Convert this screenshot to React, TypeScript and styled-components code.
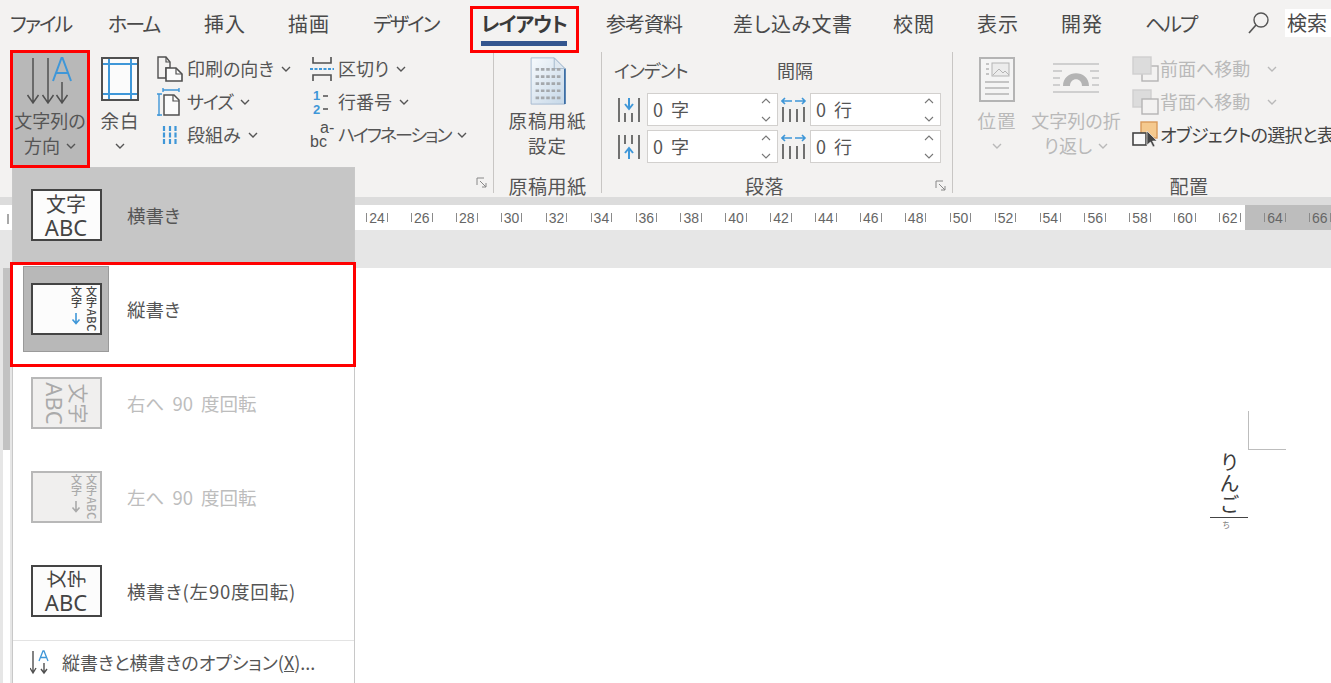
import React from 'react';
import styled, { createGlobalStyle } from 'styled-components';

const Global = createGlobalStyle`
  html, body { margin: 0; padding: 0; height: 100%; background: #fff; overflow: hidden; }
  body { font-family: "Noto Sans CJK JP", "Noto Sans", sans-serif; font-feature-settings: "palt"; color: #444; }
`;

const Page = styled.div`
  position: relative;
  width: 1331px;
  height: 683px;
  overflow: hidden;
  display: flex;
  flex-direction: column;
`;

const TabBar = styled.div`
  height: 52px;
  flex: none;
  background: #f3f2f1;
  display: flex;
  padding-left: 10px;
  font-size: 20px;
  color: #4a4a4a;
`;
const Tab = styled.div<{ $w: number; $ls: number; $active?: boolean }>`
  width: ${p => p.$w}px;
  flex: none;
  height: 46px;
  line-height: 48px;
  white-space: nowrap;
  letter-spacing: ${p => p.$ls}px;
  font-weight: ${p => (p.$active ? 700 : 400)};
  color: ${p => (p.$active ? '#3a3a3a' : '#4a4a4a')};
`;
const TabLabel = styled.span<{ $active?: boolean }>`
  display: inline-block;
  height: 46px;
  box-sizing: border-box;
  border-bottom: ${p => (p.$active ? '5px solid #33558f' : 'none')};
`;
const SearchBox = styled.div`
  display: flex;
  margin-left: 12px;
  height: 46px;
  align-items: center;
  gap: 14px;
`;
const SearchText = styled.span`
  background: #fff;
  width: 50px;
  height: 28px;
  line-height: 28px;
  padding-left: 2px;
  white-space: nowrap;
`;

const Ribbon = styled.div`
  height: 145px;
  flex: none;
  background: #f3f2f1;
  display: flex;
  font-size: 18px;
  color: #555;
  line-height: 25px;
`;
const Group = styled.section<{ $w: number; $sep?: boolean }>`
  width: ${p => p.$w}px;
  flex: none;
  height: 141px;
  display: flex;
  flex-direction: column;
  box-sizing: border-box;
  border-right: ${p => (p.$sep ? '1px solid #c8c6c4' : 'none')};
`;
const GroupBody = styled.div<{ $pl?: number }>`
  flex: none;
  height: 119px;
  display: flex;
  padding-left: ${p => p.$pl ?? 0}px;
`;
const GroupFooter = styled.footer`
  display: grid;
  grid-template-columns: 1fr auto 1fr;
  align-items: center;
  height: 22px;
  box-sizing: border-box;
  padding: 2px 5px 0 0;
  font-size: 19px;
  letter-spacing: 0.5px;
  color: #555;
`;
const FooterLabel = styled.span<{ $ml?: number; $mr?: number }>`
  grid-column: 2;
  margin-left: ${p => p.$ml ?? 0}px;
  margin-right: ${p => p.$mr ?? 0}px;
`;
const Launcher = styled.svg`
  grid-column: 3;
  justify-self: end;
`;

const BigButton = styled.div<{ $w: number; $ml?: number; $active?: boolean; $off?: boolean }>`
  width: ${p => p.$w}px;
  margin-left: ${p => p.$ml ?? 0}px;
  flex: none;
  height: 115px;
  display: flex;
  flex-direction: column;
  align-items: center;
  text-align: center;
  background: ${p => (p.$active ? '#b8b8b8' : 'transparent')};
  color: ${p => (p.$off ? '#b9b9b9' : '#555')};
`;
const BigIcon = styled.svg`
  display: block;
  flex: none;
  margin-top: 4px;
  margin-bottom: 2px;
`;
const PaperIcon = styled.svg`
  display: block;
  flex: none;
  margin-top: 5px;
  margin-bottom: 3px;
`;
const BigLine = styled.span<{ $wide?: boolean }>`
  display: flex;
  align-items: center;
  justify-content: center;
  height: 25px;
  gap: 6px;
  white-space: nowrap;
  font-size: ${p => (p.$wide ? 18.5 : 18)}px;
  letter-spacing: ${p => (p.$wide ? 1 : 0)}px;
`;

const Stack = styled.div<{ $w: number; $ml?: number }>`
  width: ${p => p.$w}px;
  margin-left: ${p => p.$ml ?? 0}px;
  flex: none;
  display: flex;
  flex-direction: column;
`;
const SmallRow = styled.div<{ $off?: boolean; $dark?: boolean }>`
  height: 33px;
  display: flex;
  align-items: center;
  white-space: nowrap;
  color: ${p => (p.$off ? '#b9b9b9' : p.$dark ? '#444' : '#555')};
`;
const SmallLabel = styled.span<{ $ls?: number }>`
  letter-spacing: ${p => p.$ls ?? 0}px;
`;
const SmallIcon = styled.span<{ $w: number }>`
  width: ${p => p.$w}px;
  flex: none;
  display: flex;
  align-items: center;
`;
const Chev = styled.svg<{ $ml?: number }>`
  margin-left: ${p => p.$ml ?? 7}px;
  flex: none;
`;

const ParaGrid = styled.div`
  padding-left: 12px;
  display: grid;
  grid-template-columns: 33px 131px 32px 131px;
  grid-template-rows: 37px 33px 33px;
  row-gap: 4px;
`;
const IndentHead = styled.div`
  grid-column: 1 / 3;
  align-self: center;
  white-space: nowrap;
  letter-spacing: -1px;
`;
const GapHead = styled.div`
  grid-column: 4;
  align-self: center;
  white-space: nowrap;
  margin-left: -33px;
`;
const ParaIcon = styled.div`
  display: flex;
  align-items: center;
  padding-left: 3px;
`;
const Spinner = styled.div`
  background: #fff;
  border: 1px solid #d2d0ce;
  box-sizing: border-box;
  display: flex;
  align-items: center;
  justify-content: space-between;
  padding: 0 6px 0 5px;
  font-size: 18px;
  word-spacing: 4px;
  color: #555;
`;
const SpinArrows = styled.svg`
  flex: none;
`;

const RibbonGap = styled.div`
  height: 8px;
  flex: none;
  background: #dcdcdc;
`;
const Ruler = styled.div`
  height: 25px;
  flex: none;
  display: flex;
  background: #fff;
`;
const RulerZone = styled.div<{ $w?: number; $pl: number; $dark?: boolean }>`
  width: ${p => (p.$w ? `${p.$w}px` : 'auto')};
  flex: ${p => (p.$w ? 'none' : 1)};
  padding-left: ${p => p.$pl}px;
  box-sizing: border-box;
  display: flex;
  background: ${p => (p.$dark ? '#bdbdbd' : '#fff')};
  overflow: hidden;
`;
const RulerTick = styled.span`
  width: 2px;
  height: 10px;
  margin: 9px 345.5px 0 7px;
  flex: none;
  background: #a8a8a8;
`;
const RulerMark = styled.span`
  width: 44.9px;
  flex: none;
  display: flex;
  align-items: center;
  justify-content: center;
  gap: 2px;
  font-family: "Liberation Sans", sans-serif;
  font-size: 14px;
  height: 25px;
  color: #666;
  white-space: nowrap;
`;
const RulerBar = styled.i`
  display: block;
  width: 1px;
  height: 9px;
  background: #8a8a8a;
`;
const GrayBand = styled.div`
  height: 38px;
  flex: none;
  background: #e6e6e6;
`;
const Workspace = styled.div`
  flex: 1;
  display: flex;
  background: #fff;
`;
const VRuler = styled.div`
  width: 12px;
  flex: none;
  box-sizing: border-box;
  padding-left: 3px;
  padding-right: 2px;
  background: #e6e6e6;
  display: flex;
  flex-direction: column;
`;
const VRulerMargin = styled.div`
  height: 182px;
  flex: none;
  background: #c2c2c2;
`;
const VRulerText = styled.div`
  flex: 1;
  background: #fff;
`;
const Paper = styled.div`
  flex: 1;
  display: flex;
  flex-direction: column;
  align-items: flex-end;
  padding: 143px 45px 0 0;
  background: #fff;
`;
const CropMark = styled.div`
  width: 38px;
  height: 39px;
  box-sizing: border-box;
  border-left: 1px solid #bdbdbd;
  border-bottom: 1px solid #bdbdbd;
`;
const Column = styled.div`
  width: 38px;
  margin-right: 38px;
  display: flex;
  flex-direction: column;
  align-items: center;
`;
const VText = styled.div`
  writing-mode: vertical-rl;
  white-space: nowrap;
  font-size: 20px;
  line-height: 24px;
  height: 67px;
  padding-top: 2px;
  box-sizing: border-box;
  color: #3a3a3a;
  letter-spacing: 1px;
`;
const Rule = styled.div`
  align-self: stretch;
  height: 1px;
  background: #444;
`;
const Ruby = styled.div`
  font-size: 8px;
  line-height: 12px;
  margin: 1px 6px 0 0;
  color: #777;
`;

/* overlay menu */
const Menu = styled.div`
  position: absolute;
  left: 12px;
  top: 167px;
  width: 343px;
  height: 520px;
  box-sizing: border-box;
  background: #fff;
  border: 1px solid #c8c8c8;
  display: flex;
  flex-direction: column;
  font-size: 18.5px;
  color: #555;
`;
const Item = styled.div<{ $hover?: boolean; $off?: boolean }>`
  height: 94px;
  flex: none;
  display: flex;
  align-items: center;
  word-spacing: 4px;
  background: ${p => (p.$hover ? '#c6c6c6' : 'transparent')};
  color: ${p => (p.$off ? '#bdbdbd' : '#555')};
`;
const ItemLabel = styled.span<{ $ls?: number }>`
  letter-spacing: ${p => p.$ls ?? 0}px;
`;
const ThumbSlot = styled.div<{ $checked?: boolean }>`
  width: 86px;
  height: 86px;
  flex: none;
  margin-left: 10px;
  margin-right: 18px;
  display: flex;
  align-items: center;
  justify-content: center;
  box-sizing: border-box;
  background: ${p => (p.$checked ? '#b8b8b8' : 'transparent')};
  border: ${p => (p.$checked ? '1px solid #9a9a9a' : 'none')};
`;
const Thumb = styled.div<{ $off?: boolean }>`
  width: 71px;
  height: 52px;
  box-sizing: border-box;
  border: 2px solid ${p => (p.$off ? '#b8b8b8' : '#444')};
  background: ${p => (p.$off ? '#f0efee' : '#fcfcfc')};
  color: ${p => (p.$off ? '#aaa' : '#444')};
  display: flex;
  align-items: center;
  justify-content: center;
  overflow: hidden;
  word-spacing: 0;
`;
const HorizontalText = styled.div<{ $turn?: boolean }>`
  display: flex;
  flex-direction: column;
  align-items: center;
  line-height: 23px;
  font-size: 20px;
  transform: ${p => (p.$turn ? 'rotate(90deg)' : 'none')};
`;
const Latin = styled.span`
  font-family: "Noto Sans", sans-serif;
  font-size: 22px;
  line-height: 24px;
`;
const SideGlyphs = styled.span`
  display: flex;
  gap: 1px;
  height: 21px;
  align-items: center;
`;
const SideGlyph = styled.span`
  display: inline-block;
  transform: rotate(-90deg);
  font-size: 19px;
  line-height: 20px;
`;
const VThumbBody = styled.div`
  width: 100%;
  height: 100%;
  display: flex;
  flex-direction: row-reverse;
  gap: 4px;
  padding: 0 3px 0 0;
  box-sizing: border-box;
  font-size: 11px;
  line-height: 11px;
  font-weight: 500;
`;
const VCol = styled.div`
  writing-mode: vertical-rl;
  white-space: nowrap;
  display: flex;
  align-items: center;
  width: 11px;
  letter-spacing: 0.5px;
  padding-top: 1px;
`;
const VArrow = styled.svg`
  display: block;
  margin-top: 3px;
`;
const Divider = styled.div`
  height: 1px;
  flex: none;
  background: #e3e3e3;
  margin-top: 2px;
`;
const OptionRow = styled.div`
  height: 42px;
  flex: none;
  display: flex;
  align-items: center;
  padding-left: 17px;
  gap: 12px;
  font-size: 18px;
  white-space: nowrap;
  color: #555;
`;

const RedBox = styled.div<{ $x: number; $y: number; $w: number; $h: number }>`
  position: absolute;
  left: ${p => p.$x}px;
  top: ${p => p.$y}px;
  width: ${p => p.$w}px;
  height: ${p => p.$h}px;
  box-sizing: border-box;
  border: 3px solid #f00;
  pointer-events: none;
`;

const Chevron = ({ off, ml, c }: { off?: boolean; ml?: number; c?: string }) => (
  <Chev $ml={ml} width="10" height="6" viewBox="0 0 10 6">
    <path d="M1 1l4 4 4-4" fill="none" stroke={c ?? (off ? '#b9b9b9' : '#555')} strokeWidth="1.4" />
  </Chev>
);

const D = '#505050';
const B = '#3f97d8';

const tabs = [
  ['ファイル', 98, -2], ['ホーム', 96, -2], ['挿入', 84, 1], ['描画', 85, 1], ['デザイン', 108, -2], ['レイアウト', 125, -1],
  ['参考資料', 127, -1], ['差し込み文書', 160, 0.5], ['校閲', 84, 1], ['表示', 84, 1], ['開発', 84, 1], ['ヘルプ', 90, -2],
] as const;

const spinIcon = (kind: 'down' | 'up' | 'side') => (
  <svg width="26" height="30" viewBox="0 0 26 30">
    {kind === 'side' ? (
      <g>
        <path d="M1 12v15M8 14v13M15 14v13M22 12v15" stroke={D} strokeWidth="1.6" fill="none" transform="translate(1 0)" />
        <path d="M1 6h10M4 3L1 6l3 3M14 6h10M21 3l3 3-3 3" stroke={B} strokeWidth="1.6" fill="none" />
      </g>
    ) : kind === 'down' ? (
      <g>
        <path d="M2 3v24M22 3v24M8 18v9M15 18v9" stroke={D} strokeWidth="1.6" fill="none" />
        <path d="M12 3v10M8 9l4 5 4-5" stroke={B} strokeWidth="2" fill="none" />
      </g>
    ) : (
      <g>
        <path d="M2 3v24M22 3v24M8 3v9M15 3v9" stroke={D} strokeWidth="1.6" fill="none" />
        <path d="M12 27V17M8 21l4-5 4 5" stroke={B} strokeWidth="2" fill="none" />
      </g>
    )}
  </svg>
);

const Spin = ({ v }: { v: string }) => (
  <Spinner>
    <span>{v}</span>
    <SpinArrows width="10" height="26" viewBox="0 0 10 26">
      <path d="M1 6l4-4 4 4M1 20l4 4 4-4" fill="none" stroke="#777" strokeWidth="1.1" />
    </SpinArrows>
  </Spinner>
);

const VerticalThumbBody = ({ off }: { off?: boolean }) => (
  <VThumbBody>
    <VCol>文字ABC</VCol>
    <VCol>
      文字
      <VArrow width="10" height="13" viewBox="0 0 10 13">
        <path d="M5 1v10M1.500 7.500L5 11.500l3.500-4" fill="none" stroke={off ? '#aaa' : B} strokeWidth="1.6" />
      </VArrow>
    </VCol>
  </VThumbBody>
);

const Mark = ({ n }: { n: number }) => (
  <RulerMark>
    <RulerBar />
    {n}
    <RulerBar />
  </RulerMark>
);

const LauncherIcon = () => (
  <Launcher width="12" height="12" viewBox="0 0 12 12">
    <path d="M1 8V1h7" fill="none" stroke="#888" strokeWidth="1" />
    <path d="M4 4l6 6M10 6v4H6" fill="none" stroke="#888" strokeWidth="1" />
  </Launcher>
);

export default function App() {
  const upper = [24, 26, 28, 30, 32, 34, 36, 38, 40, 42, 44, 46, 48, 50, 52, 54, 56, 58, 60, 62];
  return (
    <Page>
      <Global />
      <TabBar>
        {tabs.map(([t, w, ls]) => (
          <Tab key={t} $w={w} $ls={ls} $active={t === 'レイアウト'}>
            <TabLabel $active={t === 'レイアウト'}>{t}</TabLabel>
          </Tab>
        ))}
        <SearchBox>
          <svg width="24" height="24" viewBox="0 0 24 24">
            <circle cx="14" cy="9" r="7" fill="none" stroke="#555" strokeWidth="1.4" />
            <path d="M9 14L2 22" stroke="#555" strokeWidth="1.6" />
          </svg>
          <SearchText>検索</SearchText>
        </SearchBox>
      </TabBar>

      <Ribbon>
        <Group $w={494} $sep>
          <GroupBody $pl={12}>
            <BigButton $w={76} $active>
              <BigIcon width="76" height="50" viewBox="0 0 76 50">
                <path d="M21 2v45M15.500 39l5.500 8 5.500-8M36 2v45M30.500 39l5.500 8 5.500-8M50 26v21M44.500 39l5.500 8 5.500-8" fill="none" stroke={D} strokeWidth="1.5" />
                <path d="M41 25l8.500-23h1l8.500 23M44.500 17h11" fill="none" stroke={B} strokeWidth="2" />
              </BigIcon>
              <BigLine>文字列の</BigLine>
              <BigLine>方向<Chevron ml={0} /></BigLine>
            </BigButton>
            <BigButton $w={52} $ml={6}>
              <BigIcon width="40" height="50" viewBox="0 0 40 50">
                <rect x="2" y="2" width="36" height="42" fill="#fbfbfb" />
                <path d="M2 8h36M2 38h36M9 2v42M31 2v42" stroke={B} strokeWidth="2" fill="none" />
                <rect x="2" y="2" width="36" height="42" fill="none" stroke={D} strokeWidth="2" />
              </BigIcon>
              <BigLine $wide>余白</BigLine>
              <BigLine><Chevron ml={0} /></BigLine>
            </BigButton>
            <Stack $w={153} $ml={11}>
              <SmallRow>
                <SmallIcon $w={30}>
                  <svg width="28" height="28" viewBox="0 0 28 28">
                    <path d="M1 2h8l4 5v6H9v10H1z" fill="none" stroke={D} strokeWidth="1.4" />
                    <path d="M9 13h10l6 6v7H9z" fill="#fbfbfb" stroke={D} strokeWidth="1.6" />
                    <path d="M9 2v5h4M19 13v6h6" fill="none" stroke={D} strokeWidth="1.2" />
                  </svg>
                </SmallIcon>
                印刷の向き<Chevron />
              </SmallRow>
              <SmallRow>
                <SmallIcon $w={30}>
                  <svg width="28" height="28" viewBox="0 0 28 28">
                    <path d="M2 6v22M0 6h5M0 27h5M6 2h16M6 0v4M22 0v4" stroke={B} strokeWidth="1.4" fill="none" />
                    <path d="M7 7h10l5 5v15H7z" fill="#fbfbfb" stroke={D} strokeWidth="1.5" />
                    <path d="M16 7v6h6" fill="none" stroke={D} strokeWidth="1.2" />
                  </svg>
                </SmallIcon>
                <SmallLabel $ls={-1}>サイズ</SmallLabel><Chevron />
              </SmallRow>
              <SmallRow>
                <SmallIcon $w={30}>
                  <svg width="28" height="20" viewBox="0 0 28 20">
                    <path d="M7 1v18M13 1v18M18.500 1v18" stroke={B} strokeWidth="2.200" strokeDasharray="5 1.500" fill="none" />
                  </svg>
                </SmallIcon>
                段組み<Chevron />
              </SmallRow>
            </Stack>
            <Stack $w={170}>
              <SmallRow>
                <SmallIcon $w={28}>
                  <svg width="24" height="26" viewBox="0 0 24 26">
                    <path d="M3 1v6h18V1M3 25v-6h18v6" fill="none" stroke={D} strokeWidth="1.6" />
                    <path d="M0 13h24" stroke={B} strokeWidth="1.8" strokeDasharray="3 1.500" />
                  </svg>
                </SmallIcon>
                区切り<Chevron />
              </SmallRow>
              <SmallRow>
                <SmallIcon $w={28}>
                  <svg width="24" height="28" viewBox="0 0 24 28">
                    <text x="3" y="12" fontFamily="Liberation Sans, sans-serif" fontSize="13" fontWeight="700" fill={B}>1</text>
                    <text x="3" y="26" fontFamily="Liberation Sans, sans-serif" fontSize="13" fontWeight="700" fill={B}>2</text>
                    <path d="M13 8h5M13 21h5" stroke={D} strokeWidth="1.6" />
                  </svg>
                </SmallIcon>
                行番号<Chevron />
              </SmallRow>
              <SmallRow>
                <SmallIcon $w={28}>
                  <svg width="28" height="30" viewBox="0 0 28 30">
                    <text x="10" y="13" fontFamily="Liberation Sans, sans-serif" fontSize="16" fill={D}>a-</text>
                    <text x="0" y="27" fontFamily="Liberation Sans, sans-serif" fontSize="16" fill={D}>bc</text>
                  </svg>
                </SmallIcon>
                <SmallLabel $ls={-2}>ハイフネーション</SmallLabel><Chevron />
              </SmallRow>
            </Stack>
          </GroupBody>
          <GroupFooter>
            <FooterLabel />
            <LauncherIcon />
          </GroupFooter>
        </Group>

        <Group $w={108} $sep>
          <GroupBody>
            <BigButton $w={107}>
              <PaperIcon width="42" height="48" viewBox="0 0 46 54">
                <defs>
                  <linearGradient id="paper" x1="0" y1="0" x2="1" y2="1">
                    <stop offset="0" stopColor="#f6f9fc" />
                    <stop offset="1" stopColor="#c6d8e8" />
                  </linearGradient>
                </defs>
                <path d="M4 1h26l12 12v40H4z" fill="url(#paper)" stroke="#9fb6cc" />
                <path d="M42 13v40" stroke="#3c6ea5" strokeWidth="2" />
                <path d="M30 1v12h12z" fill="#dfe8f0" stroke="#9fb6cc" />
                <path d="M9 14h28M9 22h28M9 30h28M9 38h28M9 46h28" stroke="#a4a8ac" strokeWidth="3" strokeDasharray="4 2" />
              </PaperIcon>
              <BigLine $wide>原稿用紙</BigLine>
              <BigLine $wide>設定</BigLine>
            </BigButton>
          </GroupBody>
          <GroupFooter>
            <FooterLabel $ml={5}>原稿用紙</FooterLabel>
          </GroupFooter>
        </Group>

        <Group $w={351} $sep>
          <GroupBody>
            <ParaGrid>
              <IndentHead>インデント</IndentHead>
              <GapHead>間隔</GapHead>
              <ParaIcon>{spinIcon('down')}</ParaIcon>
              <Spin v="0 字" />
              <ParaIcon>{spinIcon('side')}</ParaIcon>
              <Spin v="0 行" />
              <ParaIcon>{spinIcon('up')}</ParaIcon>
              <Spin v="0 字" />
              <ParaIcon>{spinIcon('side')}</ParaIcon>
              <Spin v="0 行" />
            </ParaGrid>
          </GroupBody>
          <GroupFooter>
            <FooterLabel $mr={20}>段落</FooterLabel>
            <LauncherIcon />
          </GroupFooter>
        </Group>

        <Group $w={472}>
          <GroupBody $pl={12}>
            <BigButton $w={64} $off>
              <BigIcon width="38" height="50" viewBox="0 0 38 50">
                <rect x="2" y="2" width="34" height="43" fill="#f4f4f4" stroke="#b4b4b4" strokeWidth="2" />
                <path d="M8 8h3M8 13h3M8 18h3M7 26h24M7 32h24M7 38h24" stroke="#b4b4b4" strokeWidth="1.500" />
                <rect x="14" y="7" width="17" height="13" fill="#ececec" stroke="#b4b4b4" />
                <path d="M15 19l6-6 4 4 2-2 4 4" fill="none" stroke="#b4b4b4" />
              </BigIcon>
              <BigLine $wide>位置</BigLine>
              <BigLine><Chevron off ml={0} /></BigLine>
            </BigButton>
            <BigButton $w={92} $ml={1} $off>
              <BigIcon width="48" height="50" viewBox="0 0 48 50">
                <path d="M1 8h46M1 15h9M38 15h9M1 22h7M40 22h7M1 29h7M40 29h7M1 36h46" stroke="#c4c4c4" strokeWidth="1.500" />
                <path d="M11 30c0-17 26-17 26 0h-7c0-9-12-9-12 0z" fill="#b4b4b4" />
              </BigIcon>
              <BigLine>文字列の折</BigLine>
              <BigLine>り返し<Chevron off ml={0} /></BigLine>
            </BigButton>
            <Stack $w={300} $ml={10}>
              <SmallRow $off>
                <SmallIcon $w={28}>
                  <svg width="27" height="26" viewBox="0 0 27 26">
                    <rect x="10" y="10" width="16" height="15" fill="#f3f2f1" stroke="#b4b4b4" strokeWidth="1.4" />
                    <rect x="1" y="1" width="18" height="17" fill="#dcdcdc" stroke="#cfcfcf" strokeWidth="1.4" />
                  </svg>
                </SmallIcon>
                前面へ移動<Chevron off ml={17} />
              </SmallRow>
              <SmallRow $off>
                <SmallIcon $w={28}>
                  <svg width="27" height="26" viewBox="0 0 27 26">
                    <rect x="1" y="1" width="18" height="17" fill="#dcdcdc" stroke="#cfcfcf" strokeWidth="1.4" />
                    <rect x="10" y="10" width="16" height="15" fill="#f3f2f1" stroke="#b4b4b4" strokeWidth="1.4" />
                  </svg>
                </SmallIcon>
                背面へ移動<Chevron off ml={17} />
              </SmallRow>
              <SmallRow $dark>
                <SmallIcon $w={28}>
                  <svg width="27" height="28" viewBox="0 0 27 28">
                    <rect x="9" y="1" width="16" height="16" fill="#f5c98e" stroke="#d99a5a" strokeWidth="1.4" />
                    <rect x="1" y="12" width="13" height="12" fill="#f8f8f8" stroke="#444" strokeWidth="1.6" />
                    <path d="M15 10v14l3.500-3 2.500 5 2-1-2.500-5h4.500z" fill="#444" stroke="#f8f8f8" strokeWidth="0.6" />
                  </svg>
                </SmallIcon>
                <SmallLabel $ls={-0.7}>オブジェクトの選択と表示</SmallLabel>
              </SmallRow>
            </Stack>
          </GroupBody>
          <GroupFooter>
            <FooterLabel $ml={5}>配置</FooterLabel>
          </GroupFooter>
        </Group>
      </Ribbon>

      <RibbonGap />

      <Ruler>
        <RulerZone $w={1245} $pl={0}>
          <RulerTick />
          {upper.map(n => <Mark key={n} n={n} />)}
        </RulerZone>
        <RulerZone $pl={7.5} $dark>
          <Mark n={64} />
          <Mark n={66} />
        </RulerZone>
      </Ruler>
      <GrayBand />
      <Workspace>
        <VRuler>
          <VRulerMargin />
          <VRulerText />
        </VRuler>
        <Paper>
          <CropMark />
          <Column>
            <VText>りんご</VText>
            <Rule />
            <Ruby>ち</Ruby>
          </Column>
        </Paper>
      </Workspace>

      <Menu>
        <Item $hover>
          <ThumbSlot>
            <Thumb>
              <HorizontalText>文字<Latin>ABC</Latin></HorizontalText>
            </Thumb>
          </ThumbSlot>
          <ItemLabel>横書き</ItemLabel>
        </Item>
        <Item>
          <ThumbSlot $checked>
            <Thumb><VerticalThumbBody /></Thumb>
          </ThumbSlot>
          <ItemLabel>縦書き</ItemLabel>
        </Item>
        <Item $off>
          <ThumbSlot>
            <Thumb $off>
              <HorizontalText $turn>文字<Latin>ABC</Latin></HorizontalText>
            </Thumb>
          </ThumbSlot>
          <ItemLabel>右へ 90 度回転</ItemLabel>
        </Item>
        <Item $off>
          <ThumbSlot>
            <Thumb $off><VerticalThumbBody off /></Thumb>
          </ThumbSlot>
          <ItemLabel>左へ 90 度回転</ItemLabel>
        </Item>
        <Item>
          <ThumbSlot>
            <Thumb>
              <HorizontalText>
                <SideGlyphs><SideGlyph>文</SideGlyph><SideGlyph>字</SideGlyph></SideGlyphs>
                <Latin>ABC</Latin>
              </HorizontalText>
            </Thumb>
          </ThumbSlot>
          <ItemLabel $ls={0.8}>横書き(左90度回転)</ItemLabel>
        </Item>
        <Divider />
        <OptionRow>
          <svg width="20" height="26" viewBox="0 0 20 26">
            <path d="M3 2v22M0 19l3 5 3-5M14 14v10M11 20l3 4 3-4" fill="none" stroke={D} strokeWidth="1.400" />
            <path d="M9 12l4-10h1l4 10M10.500 8.500h6" fill="none" stroke={B} strokeWidth="1.300" />
          </svg>
          <span>縦書きと横書きのオプション(<u>X</u>)...</span>
        </OptionRow>
      </Menu>

      <RedBox $x={470} $y={6} $w={109} $h={47} />
      <RedBox $x={10} $y={50} $w={80} $h={118} />
      <RedBox $x={10} $y={262} $w={346} $h={105} />
    </Page>
  );
}
